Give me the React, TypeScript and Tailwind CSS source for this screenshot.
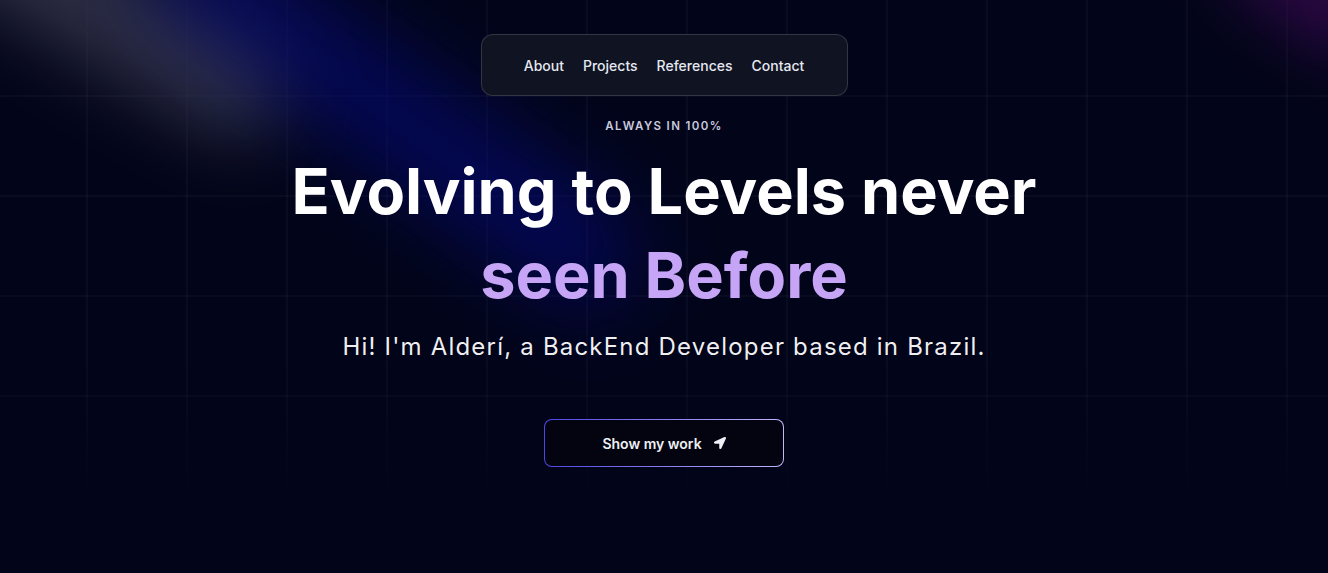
import { FaLocationArrow } from "react-icons/fa";

const navLinks = [
  { href: "#about", label: "About" },
  { href: "#projects", label: "Projects" },
  { href: "#references", label: "References" },
  { href: "#contact", label: "Contact" },
];

function Spotlights() {
  return (
    <div className="pointer-events-none absolute inset-0 overflow-hidden">
      {/* white-ish streak, top left */}
      <div className="absolute -left-[110px] -top-[50px] h-[110px] w-[420px] rotate-[30deg] rounded-full bg-[#383a4e]/80 blur-[35px]" />
      {/* blue beam */}
      <div className="absolute left-[100px] top-[70px] h-[85px] w-[580px] rotate-[36deg] rounded-full bg-[#040a78]/80 blur-[45px]" />
      {/* purple corner */}
      <div className="absolute -right-[70px] -top-[60px] h-[90px] w-[180px] rotate-[35deg] rounded-full bg-[#3a0a52]/70 blur-[30px]" />
    </div>
  );
}

function Grid() {
  return (
    <div className="pointer-events-none absolute inset-x-0 top-0 h-[520px] bg-[linear-gradient(to_right,rgba(255,255,255,0.03)_2px,transparent_2px),linear-gradient(to_bottom,rgba(255,255,255,0.03)_2px,transparent_2px)] bg-[size:100px_100px] bg-[position:86px_95px] [mask-image:linear-gradient(to_bottom,black_70%,transparent_100%)]" />
  );
}

export default function App() {
  return (
    <main className="relative h-[573px] w-full overflow-hidden bg-[#020419] font-['Inter','Noto_Sans',sans-serif] text-white">
      <Grid />
      <Spotlights />

      <div className="relative flex flex-col items-center pt-[34px]">
        <nav className="flex h-[62px] w-[367px] items-center justify-center gap-[19px] rounded-xl border border-white/15 bg-[#0f1322]">
          {navLinks.map((link) => (
            <a key={link.href} href={link.href} className="text-[14px] font-medium text-[#e6e8f0]">
              {link.label}
            </a>
          ))}
        </nav>

        <p className="mt-[22px] text-[11.5px] font-semibold uppercase tracking-[0.12em] text-[#c8cadd]">
          Always in 100%
        </p>

        <h1 className="mt-[14px] text-center text-[63px] font-bold leading-[84px]">
          Evolving to Levels never
          <br />
          <span className="text-[#c7a5f6]">seen Before</span>
        </h1>

        <p className="mt-[12px] text-[24px] tracking-[0.05em] text-white/95">
          Hi! I&apos;m Alderí, a BackEnd Developer based in Brazil.
        </p>

        <a
          href="#projects"
          className="mt-[54px] rounded-lg bg-[linear-gradient(to_right,#4f46e5,#c4b5fd)] p-px"
        >
          <span className="flex h-[46px] w-[238px] items-center justify-center gap-3 rounded-[7px] bg-[#03040f] text-[14px] font-semibold text-[#eef0f6]">
            Show my work
            <FaLocationArrow className="h-3 w-3" />
          </span>
        </a>
      </div>
    </main>
  );
}
